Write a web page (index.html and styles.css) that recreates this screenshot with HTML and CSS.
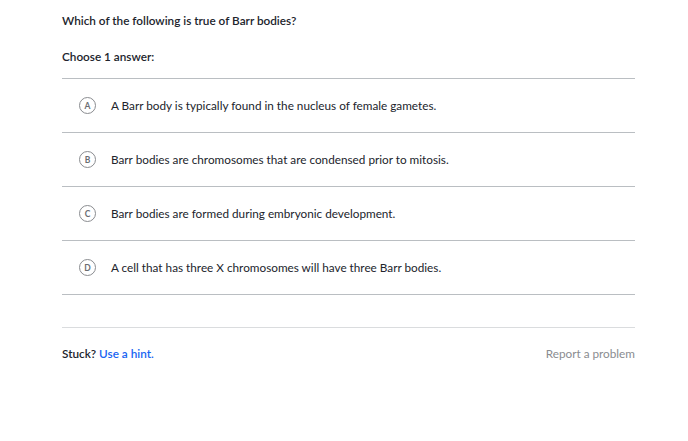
FILE: index.html
```html
<!DOCTYPE html>
<html>
<head>
<meta charset="utf-8">
<link rel="stylesheet" href="styles.css">
</head>
<body>
<div class="page">
  <div class="question">Which of the following is true of Barr bodies?</div>
  <div class="choose">Choose 1 answer:</div>
  <ul class="choices">
    <li class="choice"><span class="letter">A</span><span class="text">A Barr body is typically found in the nucleus of female gametes.</span></li>
    <li class="choice"><span class="letter">B</span><span class="text">Barr bodies are chromosomes that are condensed prior to mitosis.</span></li>
    <li class="choice"><span class="letter">C</span><span class="text">Barr bodies are formed during embryonic development.</span></li>
    <li class="choice"><span class="letter">D</span><span class="text">A cell that has three X chromosomes will have three Barr bodies.</span></li>
  </ul>
  <div class="footer">
    <div class="stuck">Stuck? <a class="hint">Use a hint.</a></div>
    <div class="report">Report a problem</div>
  </div>
</div>
</body>
</html>
```
FILE: styles.css
```css
html, body { margin: 0; padding: 0; background: #fff; }
body { font-family: Lato, "Open Sans", sans-serif; color: #21242c; }
.page { width: 573px; margin-left: 62px; padding-top: 13px; }
.question { font-size: 11.75px; font-weight: 600; line-height: 15px; height: 15px; }
.choose { font-size: 11.75px; font-weight: 600; line-height: 15px; margin-top: 21px; }
.choices { list-style: none; margin: 14px 0 0; padding: 0; border-top: 1px solid #babec2; }
.choice { display: flex; align-items: center; height: 53px; border-bottom: 1px solid #babec2; padding-left: 17px; }
.letter { width: 15px; height: 15px; border: 1.7px solid #8a8c90; border-radius: 50%; display: flex; align-items: center; justify-content: center; font-size: 8.5px; font-weight: 700; color: #6b6d72; flex: none; }
.text { margin-left: 15px; font-size: 11.75px; line-height: 15px; }
.footer { margin-top: 32px; border-top: 1px solid #dadcde; display: flex; justify-content: space-between; padding-top: 18px; font-size: 11.75px; line-height: 15px; }
.stuck { font-weight: 600; }
.hint { color: #1865f2; font-weight: 600; }
.report { color: #8a8c90; }
```
